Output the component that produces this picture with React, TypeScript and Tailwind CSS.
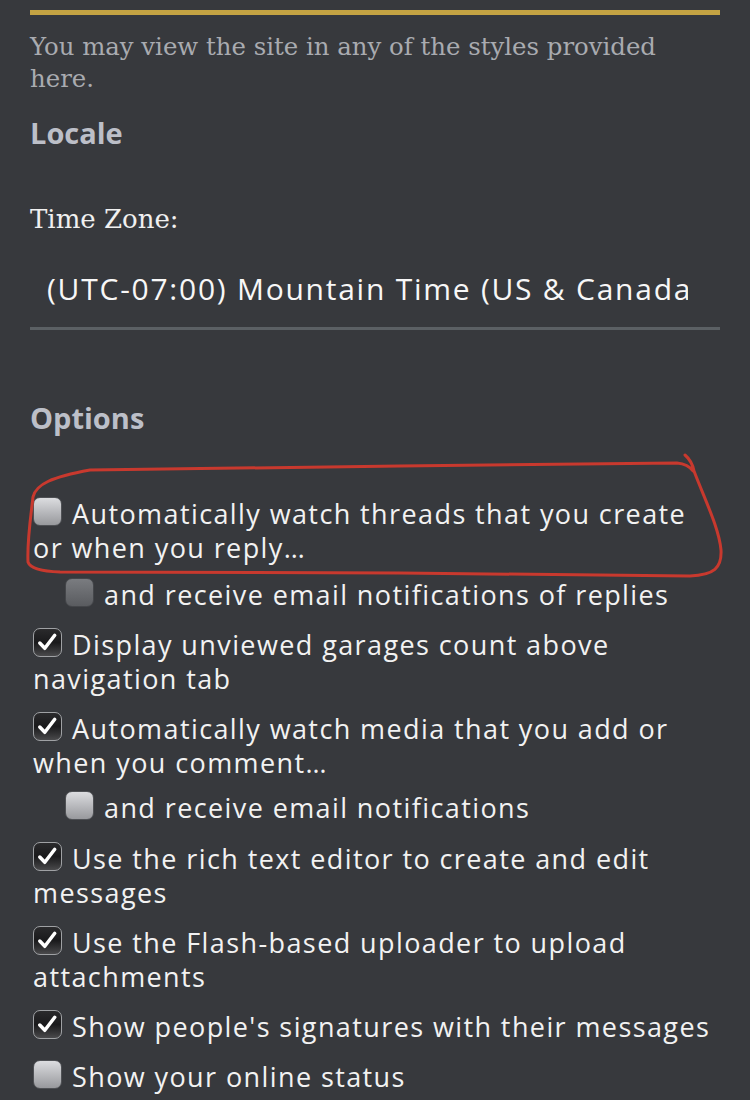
import React from "react";

const sans = "font-['Open_Sans','Noto_Sans',sans-serif]";
const serif = "font-['DejaVu_Serif','Liberation_Serif',serif]";

function Box({ state }: { state: "on" | "off" | "dim" }) {
  if (state === "on") {
    return (
      <span className="inline-block align-top w-[29px] h-[29px] rounded-[7px] border-[1.5px] border-[#9fa1a4] bg-gradient-to-b from-[#2a2a2c] via-[#1a1a1c] to-[#4a4a4c] mr-[10px] relative">
        <svg viewBox="0 0 28 28" className="absolute inset-0 w-full h-full">
          <path d="M6 14.5 L11.2 20 L21.5 6.5" fill="none" stroke="#ffffff" strokeWidth="3.6" strokeLinecap="round" strokeLinejoin="round" />
        </svg>
      </span>
    );
  }
  if (state === "dim") {
    return (
      <span className="inline-block align-top w-[29px] h-[29px] rounded-[7px] border border-[#44464a] bg-gradient-to-b from-[#7a7c80] to-[#5a5c60] mr-[10px]" />
    );
  }
  return (
    <span className="inline-block align-top w-[29px] h-[29px] rounded-[7px] border border-[#4f5155] bg-gradient-to-b from-[#dcdde0] to-[#98999d] mr-[10px]" />
  );
}

function Row({ state, sub, mt, children }: { state: "on" | "off" | "dim"; sub?: boolean; mt: string; children: React.ReactNode }) {
  return (
    <div className={`${mt} ${sub ? "pl-[35px]" : "pl-[3px]"} text-[27px] leading-[34px] tracking-[1.4px] text-[#f2f2f2] ${sans}`}>
      <Box state={state} />
      {children}
    </div>
  );
}

export default function App() {
  return (
    <div className="relative w-[750px] h-[1100px] overflow-hidden bg-[#37393d]">
      <div className="px-[30px] pt-[10px]">
        <div className="h-[5px] bg-[#c4a343]" />
        <p className={`mt-[16px] text-[24.4px] leading-[32px] text-[#a9abb0] ${serif}`}>
          You may view the site in any of the styles provided here.
        </p>
        <h2 className={`mt-[20px] text-[29px] leading-[36px] font-bold text-[#bcbfc8] ${sans}`}>Locale</h2>
        <div className={`mt-[50px] text-[26px] leading-[36px] text-[#f0f0f0] ${serif}`}>Time Zone:</div>
        <div className="mt-[19px] border-b-[3px] border-[#5b6064] pt-[15px] pb-[20px] pl-[17px] pr-[32px]">
          <div className={`text-[30px] leading-[36px] tracking-[1.75px] text-[#f7f7f7] whitespace-nowrap overflow-hidden ${sans}`}>
            (UTC-07:00) Mountain Time (US &amp; Canada)
          </div>
        </div>
        <h2 className={`mt-[70px] text-[29px] leading-[36px] font-bold text-[#bcbfc8] ${sans}`}>Options</h2>
        <Row state="off" mt="mt-[61px]">Automatically watch threads that you create or when you reply…</Row>
        <Row state="dim" sub mt="mt-[13px]">and receive email notifications of replies</Row>
        <Row state="on" mt="mt-[16px]">Display unviewed garages count above navigation tab</Row>
        <Row state="on" mt="mt-[16px]">Automatically watch media that you add or when you comment…</Row>
        <Row state="off" sub mt="mt-[11px]">and receive email notifications</Row>
        <Row state="on" mt="mt-[17px]">Use the rich text editor to create and edit messages</Row>
        <Row state="on" mt="mt-[16px]">Use the Flash-based uploader to upload attachments</Row>
        <Row state="on" mt="mt-[16px]">Show people's signatures with their messages</Row>
        <Row state="off" mt="mt-[16px]">Show your online status</Row>
      </div>
      <svg className="absolute left-0 top-0 pointer-events-none" width="750" height="1100" viewBox="0 0 750 1100">
        <path
          d="M33 497 C36 484 52 477 90 470 L400 466 L677 463 Q688 464 693 471 M685 455 Q692 461 694 471 C705 500 719 528 721 550 C722 568 714 575 690 576 L400 573 L60 572 Q31 571 28 562 C27 540 31 515 33 497"
          fill="none"
          stroke="#c8392e"
          strokeWidth="3"
          strokeLinecap="round"
          strokeLinejoin="round"
        />
      </svg>
    </div>
  );
}
